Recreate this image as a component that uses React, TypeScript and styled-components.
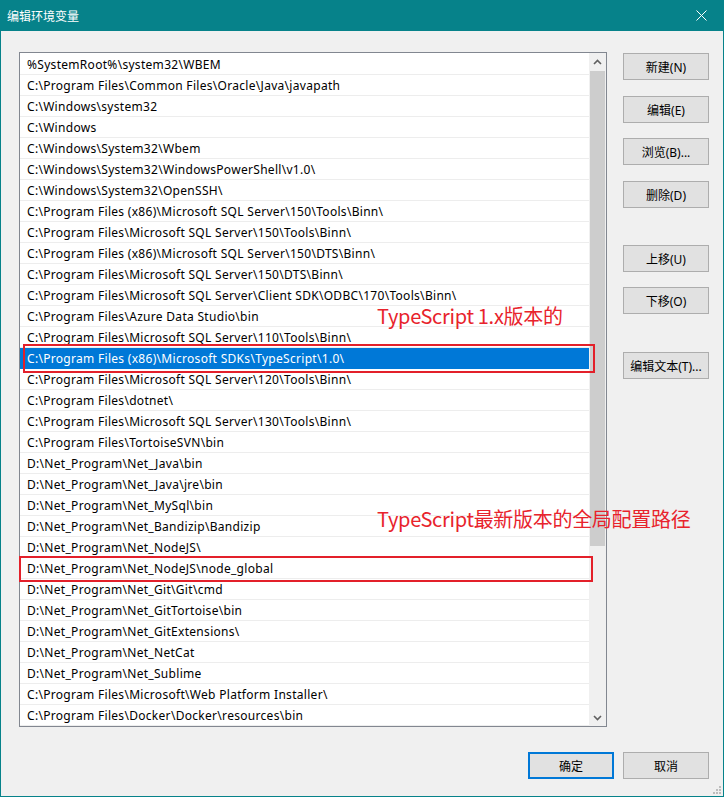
import React from "react";
import styled, { createGlobalStyle } from "styled-components";

const GlobalStyle = createGlobalStyle`
  html, body { margin: 0; padding: 0; background: #f0f0f0; }
  * { box-sizing: border-box; }
`;

const TEAL = "#06828a";
const UI_FONT = `"Noto Sans", "Noto Sans CJK SC", sans-serif`;

const Window = styled.div`
  position: relative;
  width: 724px;
  height: 797px;
  display: flex;
  flex-direction: column;
  background: #f0f0f0;
  border: 1px solid ${TEAL};
  border-top: 0;
  font-family: ${UI_FONT};
  font-size: 12px;
  color: #000;
`;

const TitleBar = styled.div`
  height: 31px;
  flex: none;
  display: flex;
  align-items: center;
  justify-content: space-between;
  background: ${TEAL};
  color: #fff;
  padding-left: 7px;
  margin: 0 -1px;
`;

const Title = styled.span`
  font-family: "Noto Sans CJK SC", sans-serif;
  font-size: 12px;
  line-height: 31px;
`;

const CloseButton = styled.div`
  width: 46px;
  height: 31px;
  display: flex;
  align-items: center;
  justify-content: center;
`;

const Body = styled.div`
  flex: 1;
  display: flex;
  flex-direction: column;
  padding: 21px 14px 17px 18px;
`;

const Main = styled.div`
  display: flex;
  gap: 16px;
  height: 675px;
`;

const ListBox = styled.div`
  width: 588px;
  height: 675px;
  border: 1px solid #828790;
  background: #fff;
  display: flex;
`;

const Items = styled.div`
  flex: 1;
  padding-top: 1px;
  overflow: hidden;
`;

const Row = styled.div<{ $selected?: boolean }>`
  height: 21px;
  border-bottom: 1px solid ${(p) => (p.$selected ? "#0078d7" : "#ededed")};
  background: ${(p) => (p.$selected ? "#0078d7" : "#fff")};
  color: ${(p) => (p.$selected ? "#fff" : "#000")};
  padding-left: 7px;
  padding-top: 1px;
  line-height: 20px;
  white-space: nowrap;
  font-family: ${UI_FONT};
  font-size: 12px;
  letter-spacing: 0.3px;
`;

const ScrollBar = styled.div`
  width: 17px;
  display: flex;
  flex-direction: column;
  background: #f0f0f0;
`;

const ArrowBox = styled.div`
  height: 17px;
  flex: none;
  display: flex;
  align-items: center;
  justify-content: center;
`;

const Track = styled.div`
  flex: 1;
  padding: 1px 1px 0 1px;
`;

const Thumb = styled.div`
  height: 475px;
  background: #cdcdcd;
`;

const Side = styled.div`
  width: 86px;
  display: flex;
  flex-direction: column;
`;

const Button = styled.div<{ $top?: number; $default?: boolean }>`
  width: 86px;
  height: 27px;
  margin-top: ${(p) => p.$top ?? 0}px;
  background: #e1e1e1;
  border: ${(p) => (p.$default ? "2px solid #0078d7" : "1px solid #adadad")};
  display: flex;
  align-items: center;
  justify-content: center;
  font-family: ${UI_FONT};
  font-size: 12px;
  color: #000;
  white-space: nowrap;
`;

const Footer = styled.div`
  margin-top: 25px;
  display: flex;
  justify-content: flex-end;
  gap: 9px;
`;

const Note = styled.div<{ $top: number; $left: number }>`
  position: absolute;
  top: ${(p) => p.$top}px;
  left: ${(p) => p.$left}px;
  color: #e8232c;
  font-family: "Noto Sans CJK SC", sans-serif;
  font-size: 20px;
  line-height: 28px;
  letter-spacing: -0.3px;
  white-space: nowrap;
`;

const Mark = styled.div<{ $top: number; $left: number; $w: number; $h: number }>`
  position: absolute;
  top: ${(p) => p.$top}px;
  left: ${(p) => p.$left}px;
  width: ${(p) => p.$w}px;
  height: ${(p) => p.$h}px;
  border: 2px solid #e3202a;
  pointer-events: none;
`;

const Grip = styled.svg`
  position: absolute;
  right: 2px;
  bottom: 2px;
`;

const paths = [
  "%SystemRoot%\\system32\\WBEM",
  "C:\\Program Files\\Common Files\\Oracle\\Java\\javapath",
  "C:\\Windows\\system32",
  "C:\\Windows",
  "C:\\Windows\\System32\\Wbem",
  "C:\\Windows\\System32\\WindowsPowerShell\\v1.0\\",
  "C:\\Windows\\System32\\OpenSSH\\",
  "C:\\Program Files (x86)\\Microsoft SQL Server\\150\\Tools\\Binn\\",
  "C:\\Program Files\\Microsoft SQL Server\\150\\Tools\\Binn\\",
  "C:\\Program Files (x86)\\Microsoft SQL Server\\150\\DTS\\Binn\\",
  "C:\\Program Files\\Microsoft SQL Server\\150\\DTS\\Binn\\",
  "C:\\Program Files\\Microsoft SQL Server\\Client SDK\\ODBC\\170\\Tools\\Binn\\",
  "C:\\Program Files\\Azure Data Studio\\bin",
  "C:\\Program Files\\Microsoft SQL Server\\110\\Tools\\Binn\\",
  "C:\\Program Files (x86)\\Microsoft SDKs\\TypeScript\\1.0\\",
  "C:\\Program Files\\Microsoft SQL Server\\120\\Tools\\Binn\\",
  "C:\\Program Files\\dotnet\\",
  "C:\\Program Files\\Microsoft SQL Server\\130\\Tools\\Binn\\",
  "C:\\Program Files\\TortoiseSVN\\bin",
  "D:\\Net_Program\\Net_Java\\bin",
  "D:\\Net_Program\\Net_Java\\jre\\bin",
  "D:\\Net_Program\\Net_MySql\\bin",
  "D:\\Net_Program\\Net_Bandizip\\Bandizip",
  "D:\\Net_Program\\Net_NodeJS\\",
  "D:\\Net_Program\\Net_NodeJS\\node_global",
  "D:\\Net_Program\\Net_Git\\Git\\cmd",
  "D:\\Net_Program\\Net_GitTortoise\\bin",
  "D:\\Net_Program\\Net_GitExtensions\\",
  "D:\\Net_Program\\Net_NetCat",
  "D:\\Net_Program\\Net_Sublime",
  "C:\\Program Files\\Microsoft\\Web Platform Installer\\",
  "C:\\Program Files\\Docker\\Docker\\resources\\bin",
];

const sideButtons: { label: string; top: number }[] = [
  { label: "新建(N)", top: 1 },
  { label: "编辑(E)", top: 16 },
  { label: "浏览(B)...", top: 15 },
  { label: "删除(D)", top: 16 },
  { label: "上移(U)", top: 37 },
  { label: "下移(O)", top: 15 },
  { label: "编辑文本(T)...", top: 38 },
];

const Chevron = ({ up }: { up?: boolean }) => (
  <svg width="9" height="6" viewBox="0 0 9 6">
    <polyline
      points={up ? "1,5 4.5,1.5 8,5" : "1,1 4.5,4.5 8,1"}
      fill="none"
      stroke="#606060"
      strokeWidth="1.6"
    />
  </svg>
);

export default function App() {
  return (
    <>
      <GlobalStyle />
      <Window>
        <TitleBar>
          <Title>编辑环境变量</Title>
          <CloseButton>
            <svg width="11" height="11" viewBox="0 0 11 11">
              <path d="M0.5 0.5 L10.5 10.5 M10.5 0.5 L0.5 10.5" stroke="#fff" strokeWidth="1" />
            </svg>
          </CloseButton>
        </TitleBar>
        <Body>
          <Main>
            <ListBox>
              <Items>
                {paths.map((p, i) => (
                  <Row key={i} $selected={i === 14}>
                    {p}
                  </Row>
                ))}
              </Items>
              <ScrollBar>
                <ArrowBox>
                  <Chevron up />
                </ArrowBox>
                <Track>
                  <Thumb />
                </Track>
                <ArrowBox>
                  <Chevron />
                </ArrowBox>
              </ScrollBar>
            </ListBox>
            <Side>
              {sideButtons.map((b) => (
                <Button key={b.label} $top={b.top}>
                  {b.label}
                </Button>
              ))}
            </Side>
          </Main>
          <Footer>
            <Button $default>确定</Button>
            <Button>取消</Button>
          </Footer>
        </Body>
        <Note $top={302} $left={376}>TypeScript 1.x版本的</Note>
        <Note $top={505} $left={376}>TypeScript最新版本的全局配置路径</Note>
        <Mark $top={344} $left={22} $w={572} $h={29} />
        <Mark $top={556} $left={18} $w={574} $h={26} />
        <Grip width="8" height="8" viewBox="0 0 8 8">
          <g fill="#bdbdbd">
            <rect x="6" y="0" width="2" height="2" />
            <rect x="3" y="3" width="2" height="2" />
            <rect x="6" y="3" width="2" height="2" />
            <rect x="0" y="6" width="2" height="2" />
            <rect x="3" y="6" width="2" height="2" />
            <rect x="6" y="6" width="2" height="2" />
          </g>
        </Grip>
      </Window>
    </>
  );
}
